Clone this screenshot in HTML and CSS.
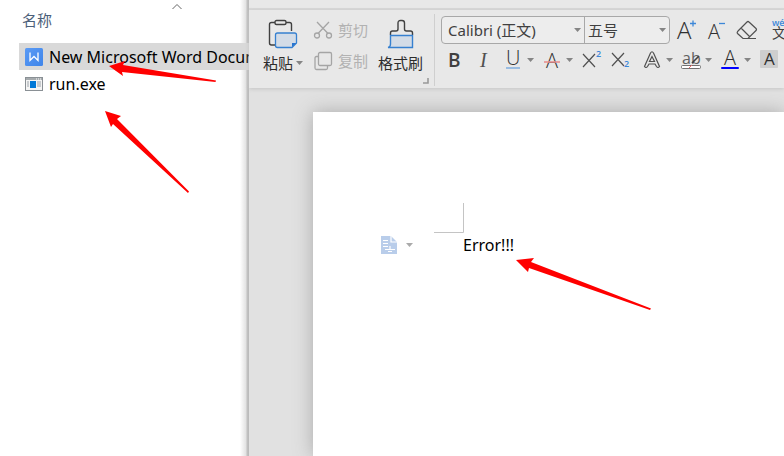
FILE: index.html
```html
<!DOCTYPE html>
<html lang="zh-CN">
<head>
<meta charset="utf-8">
<title>Word</title>
<link rel="stylesheet" href="styles.css">
</head>
<body>
<div class="desktop">
  <section class="explorer" aria-label="文件">
    <button class="column-head" type="button">
      <svg class="sort" width="12" height="9" viewBox="0 0 12 9"><path d="M1.500 7L6 2.500L10.500 7" fill="none" stroke="#666" stroke-width="1"/></svg>
      <span>名称</span>
    </button>
    <ul class="files">
      <li class="file selected">
        <svg width="18" height="18" viewBox="0 0 18 18"><defs><linearGradient id="doc" x2="1" y2="1"><stop stop-color="#5b9bf5"/><stop offset="1" stop-color="#3f85ea"/></linearGradient></defs><rect width="18" height="18" rx="1.500" fill="url(#doc)"/><path d="M5 4.500V12.500L9 8.500L13 12.500V4.500" fill="none" stroke="#fff" stroke-width="1.300"/></svg>
        <span>New Microsoft Word Document.docx</span>
      </li>
      <li class="file">
        <svg width="18" height="18" viewBox="0 0 18 18"><rect x=".5" y="2.500" width="17" height="13" fill="#f5f5f5" stroke="#8a9095"/><path d="M1 4H17" stroke="#8a9095" stroke-width="1.500"/><path d="M11 4H12M13 4H14M15 4H16" stroke="#fff"/><rect x="5" y="6" width="6" height="7" fill="#0078d7"/><path d="M2 7H4M2 9H4M2 11H4M12 7H16M12 9H16M12 11H16" stroke="#9ba2a8"/></svg>
        <span>run.exe</span>
      </li>
    </ul>
  </section>

  <main class="editor">
    <div class="tabs"></div>
    <div class="ribbon">
      <div class="clipboard">
        <button class="big" type="button">
          <svg width="30" height="30" viewBox="0 0 30 30"><path d="M7 3.500H3.500Q1.500 3.500 1.500 5.500V24Q1.500 26 3.500 26H7M18 3.500H21.500Q23.500 3.500 23.500 5.500V12" fill="none" stroke="#404040" stroke-width="1.400"/><rect x="7" y="1.500" width="11" height="4" rx="1.500" fill="#e8e8e8" stroke="#404040" stroke-width="1.400"/><path d="M9.500 14H26.500Q28.500 14 28.500 16V24L24 28.500H9.500Q7.500 28.500 7.500 26.500V16Q7.500 14 9.500 14Z" fill="#d3dce7" stroke="#3680d0" stroke-width="1.300"/><path d="M24 28V24H28.500Z" fill="#2875d0"/></svg>
          <span class="label">粘贴<i class="caret"></i></span>
        </button>
        <div class="stack">
          <button class="small" type="button" disabled>
            <svg width="20" height="20" viewBox="0 0 20 20" fill="none" stroke="#a5a5a5" stroke-width="1.300"><path d="M4 2L15 13.500M16 2L5 13.500"/><circle cx="4" cy="15.500" r="2.500"/><circle cx="16" cy="15.500" r="2.500"/></svg>剪切</button>
          <button class="small" type="button" disabled>
            <svg width="20" height="20" viewBox="0 0 20 20" fill="none" stroke="#a5a5a5" stroke-width="1.300"><rect x="5.500" y="1.500" width="13" height="13" rx="1.500"/><path d="M5.500 5.500H3.500Q2 5.500 2 7V17Q2 18.500 3.500 18.500H13Q14.500 18.500 14.500 17V14.500"/></svg>复制</button>
        </div>
        <button class="big" type="button">
          <svg width="30" height="30" viewBox="0 0 30 30"><path d="M4.500 16V14Q4.500 12 6.500 12H10Q12 12 12 10V4Q12 1.500 14.500 1.500H16Q18.500 1.500 18.500 4V10Q18.500 12 20.500 12H24.500Q26.500 12 26.500 14V16" fill="none" stroke="#404040" stroke-width="1.400"/><path d="M4.500 16.500H26.500V28.500H2Q4.500 28 4.500 25Z" fill="#d3dce7" stroke="#3680d0" stroke-width="1.400"/></svg>
          <span class="label">格式刷</span>
        </button>
        <svg class="launcher" width="6" height="6" viewBox="0 0 6 6"><path d="M5 0V5H0" fill="none" stroke="#999" stroke-width="1.600"/></svg>
      </div>

      <div class="font">
        <div class="row">
          <div class="combos">
            <label class="combo family"><select aria-label="字体"><option>Calibri (正文)</option></select><i class="caret"></i></label>
            <label class="combo size"><select aria-label="字号"><option>五号</option></select><i class="caret"></i></label>
          </div>
          <button class="tool" type="button" aria-label="增大字号"><svg width="30" height="28" viewBox="0 0 30 28"><text class="glyph large" x="5" y="23">A</text><path d="M18 7.500H24M21 4.500V10.500" stroke="#3c87d8" stroke-width="1.300"/></svg></button>
          <button class="tool" type="button" aria-label="减小字号"><svg width="30" height="28" viewBox="0 0 30 28"><text class="glyph" x="6" y="23">A</text><path d="M17 7.500H23" stroke="#3c87d8" stroke-width="1.300"/></svg></button>
          <button class="tool" type="button" aria-label="清除格式"><svg width="30" height="28" viewBox="0 0 30 28" fill="none" stroke="#505050" stroke-width="1.200"><path d="M6.500 14.500L15 6Q16 5 17 6L24 12.500Q25 13.500 24 14.500L16 22.500H11L5.500 17.500Q4.500 16.500 6.500 14.500ZM9 12L18 21M13 22.500H24"/></svg></button>
          <button class="tool" type="button" aria-label="拼音指南"><svg width="30" height="28" viewBox="0 0 30 28"><text class="pinyin" x="10" y="10">wén</text><text class="hanzi" x="10" y="22">文</text></svg></button>
        </div>
        <div class="row formats">
          <button class="tool" type="button" aria-label="加粗"><svg width="28" height="24" viewBox="0 0 28 24"><text class="bold" x="7" y="19">B</text></svg></button>
          <button class="tool" type="button" aria-label="倾斜"><svg width="28" height="24" viewBox="0 0 28 24"><text class="italic" x="10" y="19">I</text></svg></button>
          <button class="tool" type="button" aria-label="下划线"><svg width="28" height="24" viewBox="0 0 28 24"><text class="glyph" x="7" y="17">U</text><path d="M7 20H21" stroke="#78a9df" stroke-width="1.400"/></svg><i class="caret"></i></button>
          <button class="tool" type="button" aria-label="删除线"><svg width="28" height="24" viewBox="0 0 28 24"><text class="glyph" x="8" y="20">A</text><path d="M6 14H22" stroke="#e79090" stroke-width="1.600"/></svg><i class="caret"></i></button>
          <button class="tool" type="button" aria-label="上标"><svg width="28" height="24" viewBox="0 0 28 24"><path d="M6 6L18 19M18 6L6 19" stroke="#505050" stroke-width="1.200"/><text class="script" x="19" y="9">2</text></svg></button>
          <button class="tool last-single" type="button" aria-label="下标"><svg width="28" height="24" viewBox="0 0 28 24"><path d="M6 5L18 18M18 5L6 18" stroke="#505050" stroke-width="1.200"/><text class="script" x="18" y="19">2</text></svg></button>
          <button class="tool" type="button" aria-label="文字效果"><svg width="28" height="24" viewBox="0 0 28 24"><path d="M6.500 18.500L12.500 5Q14 2.500 15.500 5L21.500 18.500Q20 20.500 18.500 18.500L17 16H11L9.500 18.500Q8 20.500 6.500 18.500ZM14 8.500L11.500 13.500H16.500Z" fill="none" stroke="#505050" stroke-width="1.200"/></svg><i class="caret"></i></button>
          <button class="tool" type="button" aria-label="突出显示"><svg width="28" height="24" viewBox="0 0 28 24"><text class="ab" x="5" y="16">ab</text><path d="M22 8L15 15" stroke="#404040" stroke-width="1.600"/><rect x="4.500" y="17.500" width="19" height="3" rx="1" fill="#fff" stroke="#707070"/><path d="M12 20L15 17" stroke="#e66"/></svg><i class="caret"></i></button>
          <button class="tool" type="button" aria-label="字体颜色"><svg width="28" height="24" viewBox="0 0 28 24"><text class="glyph" x="8" y="17">A</text><path d="M6 20H22" stroke="#00f" stroke-width="2" stroke-linecap="round"/></svg><i class="caret"></i></button>
          <button class="tool" type="button" aria-label="字符底纹"><svg width="28" height="24" viewBox="0 0 28 24"><rect x="5" y="2" width="18" height="18" rx="1" fill="#cecece"/><text class="shade" x="9" y="17">A</text></svg></button>
        </div>
      </div>
    </div>

    <div class="workspace">
      <article class="page">
        <svg class="crop-mark" width="31" height="31" viewBox="0 0 31 31"><path d="M29.500 0V29.500H0" fill="none" stroke="#c4c4c4"/></svg>
        <div class="line">
          <button class="paragraph" type="button" aria-label="段落布局"><svg width="16" height="18" viewBox="0 0 16 18"><path d="M0 0H10L16 6V18H0Z" fill="#b9cdea"/><path d="M10 0V6H16M2 4.500H7M2 7.500H7M2 10.500H7M4 13.500H14M9 10V13M7 15.500H11" fill="none" stroke="#fff" stroke-width="1.200"/></svg><i class="caret"></i></button>
          <p>Error!!!</p>
        </div>
      </article>
    </div>
  </main>

  <svg class="arrows" width="784" height="456" viewBox="0 0 784 456" fill="#f00" aria-hidden="true">
    <path d="M109 66L125 61L123 65L216 80.500L215.500 82L122 72L123 76Z"/>
    <path d="M105 111L121 116L117 119L189 191.500L188 193L113 124L111 127Z"/>
    <path d="M516 260L534 258L531 262L651 308.500L650 310L529 268L528 272Z"/>
  </svg>
</div>
</body>
</html>
```
FILE: styles.css
```css
* {
  box-sizing: border-box;
}

body {
  margin: 0;
  font: 16px/24px "Noto Sans", "Noto Sans CJK SC", sans-serif;
  color: #000;
}

button,
select {
  margin: 0;
  padding: 0;
  border: 0;
  background: none;
  font: inherit;
  color: inherit;
}

svg {
  display: block;
  flex: none;
}

.desktop {
  position: relative;
  display: flex;
  min-height: 100vh;
  overflow: hidden;
  background: #fff;
}

.explorer {
  flex: 0 0 249px;
  min-width: 0;
  overflow: hidden;
  background: linear-gradient(to left, #b9b9b9 0, #c2c2c2 2px, #e2e2e2 3px, #fff 9px);
}

.column-head {
  display: block;
  width: 100%;
  padding: 2px 0 0 22px;
  text-align: left;
  font-size: 15px;
  line-height: 18px;
  color: #4c607a;
}

.sort {
  margin-left: 149px;
}

.files {
  margin: 14px 0 0;
  padding: 0 0 0 19px;
  list-style: none;
}

.file {
  display: flex;
  align-items: center;
  gap: 6px;
  height: 27px;
  padding-left: 6px;
  white-space: nowrap;
}

.file.selected {
  background: #d9d9d9;
}

.editor {
  display: flex;
  flex: 1;
  flex-direction: column;
  min-width: 0;
  background: #e1e1e1;
}

.tabs {
  height: 10px;
  border-bottom: 2px solid #d8d8d8;
  background: #e8e8e8;
}

.ribbon {
  display: flex;
  height: 78px;
  overflow: hidden;
  background: #e8e8e8;
  box-shadow: 0 1px 4px #c4c4c4;
}

.clipboard {
  position: relative;
  display: flex;
  flex: none;
  align-items: flex-start;
  gap: 10px;
  margin: 4px 0 2px;
  padding: 5px 11px 0 14px;
  border-right: 1px solid #cfcfcf;
  font-size: 15px;
  line-height: 20px;
  color: #2c2c2c;
}

.big {
  display: flex;
  flex-direction: column;
  align-items: center;
  gap: 4px;
}

.label {
  display: flex;
  align-items: center;
  gap: 3px;
}

.stack {
  display: grid;
  gap: 11px;
  padding-top: 1px;
}

.small {
  display: flex;
  align-items: center;
  gap: 5px;
  color: #b2b2b2;
}

.launcher {
  position: absolute;
  right: 5px;
  bottom: 2px;
}

.caret {
  flex: none;
  width: 7px;
  height: 4px;
  background: #858585;
  clip-path: polygon(0 0, 100% 0, 50% 100%);
}

.font {
  display: flex;
  flex-direction: column;
  gap: 4px;
  padding: 6px 0 0 6px;
}

.row {
  display: flex;
}

.combos {
  display: flex;
  flex: none;
  margin-right: 2px;
  border: 1px solid #a8a8a8;
  border-radius: 4px;
  background: #ededed;
}

.combo {
  display: flex;
  align-items: center;
  height: 26px;
  padding: 0 3px 0 6px;
}

.combo select {
  flex: 1;
  min-width: 0;
  appearance: none;
  font-size: 15px;
  line-height: 24px;
  color: #404040;
}

.family {
  width: 142px;
}

.size {
  width: 85px;
  padding-left: 3px;
  border-left: 1px solid #a8a8a8;
}

.formats {
  gap: 1px;
}

.tool {
  display: flex;
  flex: none;
  align-items: center;
}

.tool .caret {
  margin-right: 3px;
}

.last-single {
  margin-right: 3px;
}

.glyph,
.shade {
  font: 300 20px "Open Sans", sans-serif;
  fill: #303030;
}

.large {
  font-size: 24px;
}

.shade {
  font-size: 17px;
  font-weight: 400;
}

.bold {
  font: 600 19px "Open Sans", sans-serif;
  fill: #404040;
}

.italic {
  font: italic 20px "Liberation Serif", serif;
  fill: #505050;
}

.ab {
  font: 16px "Open Sans", sans-serif;
  fill: #606060;
}

.script {
  font: 600 9px "Open Sans", sans-serif;
  fill: #3c87d8;
}

.pinyin {
  font: 600 9px "Open Sans", sans-serif;
  fill: #3c87d8;
}

.hanzi {
  font: 14px "Noto Sans CJK SC", sans-serif;
  fill: #404040;
}

.workspace {
  display: flex;
  flex: 1;
  padding: 24px 0 0 64px;
  overflow: hidden;
}

.page {
  flex: 1;
  padding: 91px 0 0 68px;
  background: #fff;
  box-shadow: 0 0 18px #aaa;
}

.crop-mark {
  margin-left: 53px;
}

.line {
  display: flex;
  align-items: center;
  gap: 50px;
  line-height: 22px;
}

.line p {
  margin: 0;
}

.paragraph {
  display: flex;
  align-items: center;
  gap: 9px;
}

.paragraph .caret {
  background: #aaa;
}

.arrows {
  position: absolute;
  top: 0;
  left: 0;
  pointer-events: none;
}
```
